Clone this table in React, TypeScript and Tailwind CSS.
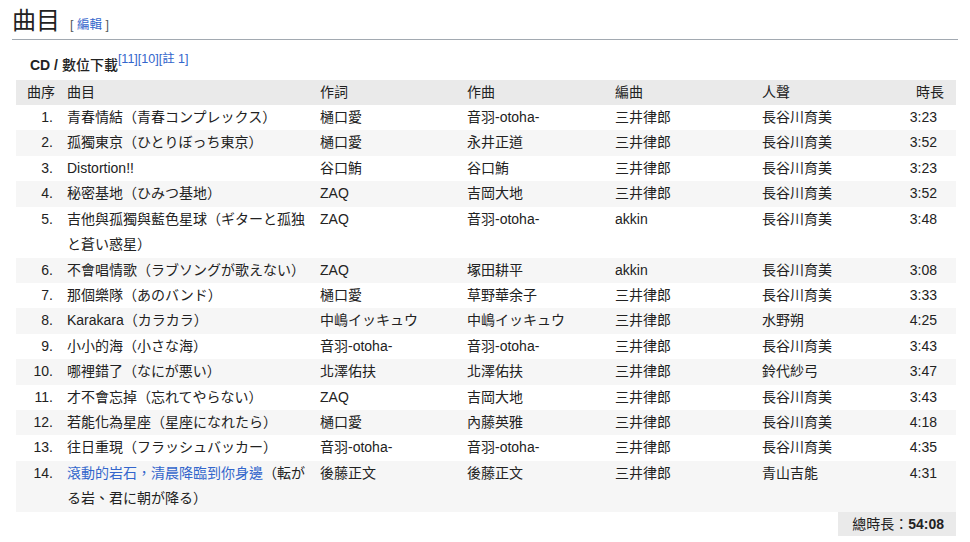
const tracks = [
  { no: 1, title: "青春情結", jp: "青春コンプレックス", lyrics: "樋口愛", music: "音羽-otoha-", arr: "三井律郎", vocal: "長谷川育美", time: "3:23" },
  { no: 2, title: "孤獨東京", jp: "ひとりぼっち東京", lyrics: "樋口愛", music: "永井正道", arr: "三井律郎", vocal: "長谷川育美", time: "3:52" },
  { no: 3, title: "Distortion!!", jp: "", lyrics: "谷口鮪", music: "谷口鮪", arr: "三井律郎", vocal: "長谷川育美", time: "3:23" },
  { no: 4, title: "秘密基地", jp: "ひみつ基地", lyrics: "ZAQ", music: "吉岡大地", arr: "三井律郎", vocal: "長谷川育美", time: "3:52" },
  { no: 5, title: "吉他與孤獨與藍色星球", jp: "ギターと孤独と蒼い惑星", lyrics: "ZAQ", music: "音羽-otoha-", arr: "akkin", vocal: "長谷川育美", time: "3:48" },
  { no: 6, title: "不會唱情歌", jp: "ラブソングが歌えない", lyrics: "ZAQ", music: "塚田耕平", arr: "akkin", vocal: "長谷川育美", time: "3:08" },
  { no: 7, title: "那個樂隊", jp: "あのバンド", lyrics: "樋口愛", music: "草野華余子", arr: "三井律郎", vocal: "長谷川育美", time: "3:33" },
  { no: 8, title: "Karakara", jp: "カラカラ", lyrics: "中嶋イッキュウ", music: "中嶋イッキュウ", arr: "三井律郎", vocal: "水野朔", time: "4:25" },
  { no: 9, title: "小小的海", jp: "小さな海", lyrics: "音羽-otoha-", music: "音羽-otoha-", arr: "三井律郎", vocal: "長谷川育美", time: "3:43" },
  { no: 10, title: "哪裡錯了", jp: "なにが悪い", lyrics: "北澤佑扶", music: "北澤佑扶", arr: "三井律郎", vocal: "鈴代紗弓", time: "3:47" },
  { no: 11, title: "才不會忘掉", jp: "忘れてやらない", lyrics: "ZAQ", music: "吉岡大地", arr: "三井律郎", vocal: "長谷川育美", time: "3:43" },
  { no: 12, title: "若能化為星座", jp: "星座になれたら", lyrics: "樋口愛", music: "內藤英雅", arr: "三井律郎", vocal: "長谷川育美", time: "4:18" },
  { no: 13, title: "往日重現", jp: "フラッシュバッカー", lyrics: "音羽-otoha-", music: "音羽-otoha-", arr: "三井律郎", vocal: "長谷川育美", time: "4:35" },
  { no: 14, title: "滾動的岩石，清晨降臨到你身邊", jp: "転がる岩、君に朝が降る", lyrics: "後藤正文", music: "後藤正文", arr: "三井律郎", vocal: "青山吉能", time: "4:31", link: true },
];

export default function App() {
  return (
    <div className="min-h-[542px] bg-white px-[12px] text-[#222] font-['Liberation_Sans','Noto_Sans_CJK_TC',sans-serif]">
      {/* HEADING */}
      <h2 className="flex items-baseline border-b border-[#a2a9b1] pt-[5px] pb-[3px]">
        <span className="text-[24px] leading-[31px]">曲目</span>
        <span className="ml-[10px] text-[12.5px] text-[#54595d]">
          [ <a href="#" className="text-[#3366cc]">編輯</a> ]
        </span>
      </h2>

      {/* CAPTION */}
      <div className="mx-[4px] mt-[14px] pl-[14px] text-[14px] leading-[20px] font-bold">
        CD / <span className="font-medium">數位下載</span>
        <sup className="relative -top-[1px] text-[12.5px] font-normal text-[#3366cc] align-super leading-none">
          [11][10][註 1]
        </sup>
      </div>

      {/* TRACK LIST */}
      <table className="mx-[4px] mt-[5px] w-[940px] table-fixed border-collapse text-[14px] leading-[25.4px]">
        <colgroup>
          <col className="w-[45px]" />
          <col className="w-[253px]" />
          <col className="w-[147px]" />
          <col className="w-[148px]" />
          <col className="w-[147px]" />
          <col className="w-[147px]" />
          <col className="w-[53px]" />
        </colgroup>
        <thead>
          <tr className="bg-[#eaeaea] text-left">
            <th className="pl-[11px] font-normal whitespace-nowrap">曲序</th>
            <th className="pl-[6px] font-normal">曲目</th>
            <th className="pl-[6px] font-normal">作詞</th>
            <th className="pl-[6px] font-normal">作曲</th>
            <th className="pl-[6px] font-normal">編曲</th>
            <th className="pl-[6px] font-normal">人聲</th>
            <th className="pr-[12px] text-right font-normal">時長</th>
          </tr>
        </thead>
        <tbody>
          {tracks.map((t) => (
            <tr key={t.no} className="align-top odd:bg-white even:bg-[#f6f6f6]">
              <td className="pr-[8px] text-right">{t.no}.</td>
              <td className="px-[6px]">
                {t.link ? <a href="#" className="text-[#3366cc]">{t.title}</a> : t.title}
                {t.jp && `（${t.jp}）`}
              </td>
              <td className="px-[6px]">{t.lyrics}</td>
              <td className="px-[6px]">{t.music}</td>
              <td className="px-[6px]">{t.arr}</td>
              <td className="px-[6px]">{t.vocal}</td>
              <td className="pr-[19px] text-right">{t.time}</td>
            </tr>
          ))}
          <tr>
            <td colSpan={5} />
            <td colSpan={2} className="p-0">
              <div className="ml-auto w-[118px] bg-[#eaeaea] pr-[12px] text-right leading-[24px] whitespace-nowrap">
                總時長：<b>54:08</b>
              </div>
            </td>
          </tr>
        </tbody>
      </table>
    </div>
  );
}
